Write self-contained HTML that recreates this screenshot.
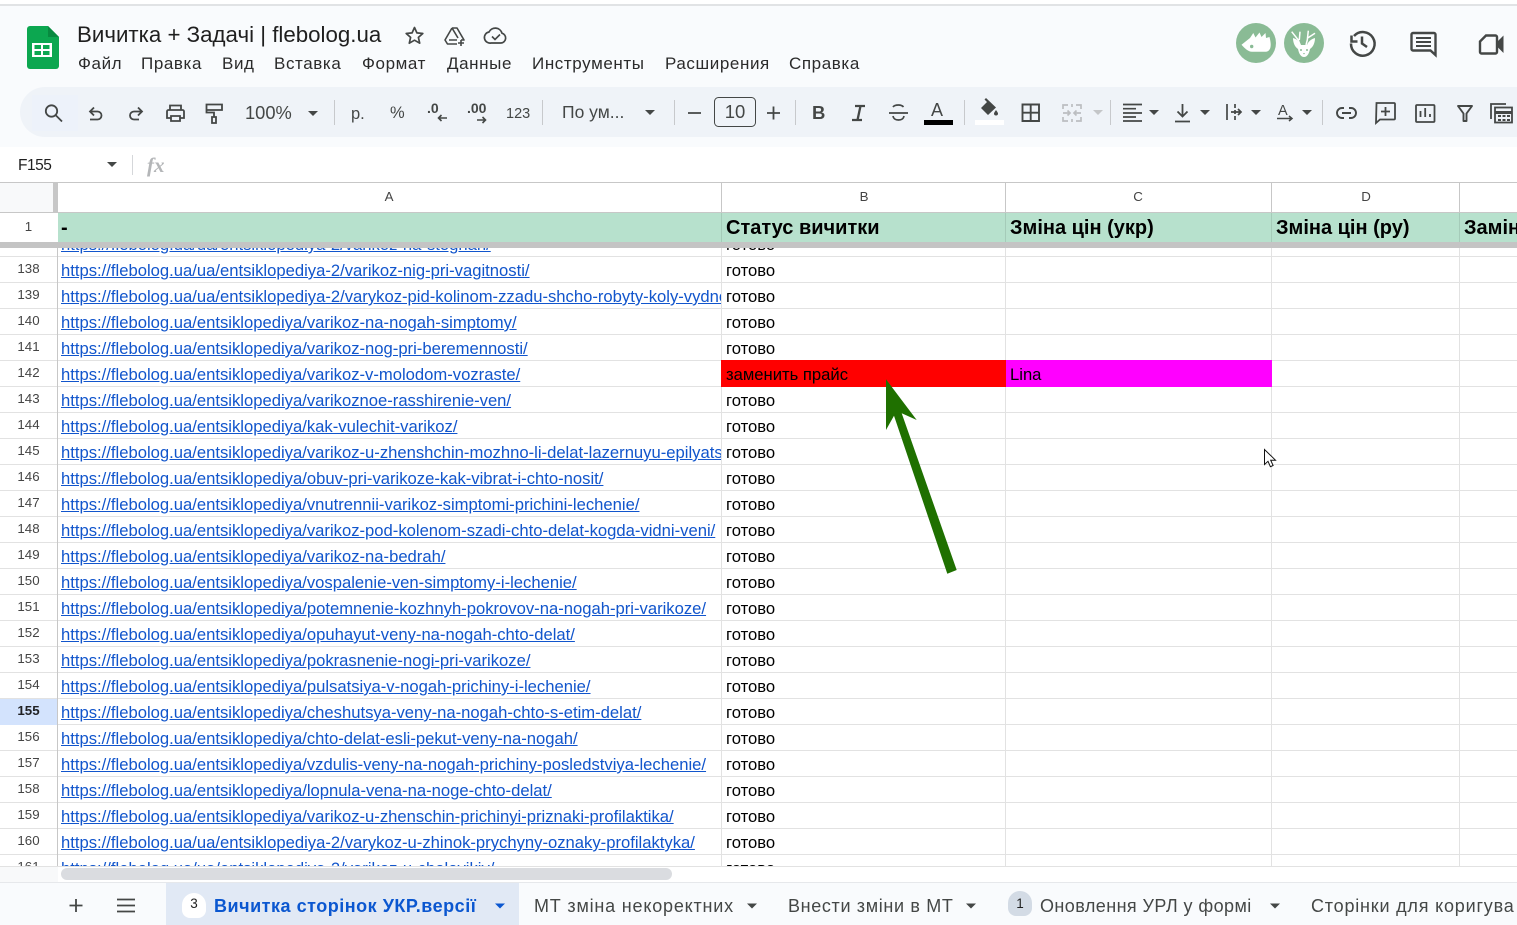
<!DOCTYPE html>
<html lang="uk"><head><meta charset="utf-8"><title>Вичитка + Задачі | flebolog.ua</title>
<style>
html,body{margin:0;padding:0;width:1517px;height:925px;overflow:hidden;background:#fff}
body{position:relative;font-family:"Liberation Sans",sans-serif;color:#000}
.abs,.r,.v,.t{position:absolute}
.r{left:0;width:1517px;height:25px;border-bottom:1px solid #e2e2e2}
.r i{position:absolute;left:0;width:57px;top:0;height:25px;text-align:center;font:normal 13.3px/23px "Liberation Sans",sans-serif;color:#444}
.r a{position:absolute;left:61px;top:0;width:660px;overflow:hidden;white-space:nowrap;font-size:16.64px;line-height:28px;height:25px;color:#1155cc;text-decoration:underline;text-underline-offset:1px}
.r b{position:absolute;left:726px;top:0;font-weight:normal;font-size:16.64px;line-height:28px;height:25px;overflow:hidden}
.v{width:1px;background:#e2e2e2;top:248px;height:619px}
.t{white-space:nowrap}
.m{top:54px;font-size:17px;line-height:20px;color:#2b2b2b;letter-spacing:.6px}
.tb{top:896px;font-size:18px;line-height:21px;color:#444746}
svg text{font-family:"Liberation Sans",sans-serif}
</style></head><body>

<!-- top chrome -->
<div class="abs" style="left:0;top:6px;width:1517px;height:141px;background:#f9fbfd"></div>
<div class="abs" style="left:0;top:4px;width:1517px;height:2px;background:#e1e3e5"></div>
<div class="abs" style="left:20px;top:87px;width:1497px;height:50px;background:#eff3f8;border-radius:25px 0 0 25px"></div>
<div class="abs" style="left:32px;top:95px;width:46px;height:36px;background:#edf2fa"></div>

<div class="t" style="left:77px;top:21px;font-size:22.3px;line-height:28px;color:#1f1f1f">Вичитка + Задачі | flebolog.ua</div>
<div class="t m" style="left:78px">Файл</div>
<div class="t m" style="left:141px">Правка</div>
<div class="t m" style="left:222px">Вид</div>
<div class="t m" style="left:274px">Вставка</div>
<div class="t m" style="left:362px">Формат</div>
<div class="t m" style="left:447px">Данные</div>
<div class="t m" style="left:532px">Инструменты</div>
<div class="t m" style="left:665px">Расширения</div>
<div class="t m" style="left:789px">Справка</div>

<!-- grid: frozen header -->
<div class="abs" style="left:0;top:182px;width:1517px;height:1px;background:#c7c7c7"></div>
<div class="abs" style="left:0;top:183px;width:53px;height:29px;background:#f8f9fa"></div>
<div class="abs" style="left:53px;top:183px;width:5px;height:29px;background:#c7c7c7"></div>
<div class="abs" style="left:0;top:212px;width:1517px;height:1px;background:#c7c7c7"></div>
<div class="abs" style="left:58px;top:213px;width:1459px;height:29px;background:#b7e1cd"></div>
<div class="abs" style="left:721px;top:183px;width:1px;height:29px;background:#c7c7c7"></div>
<div class="abs" style="left:1005px;top:183px;width:1px;height:29px;background:#c7c7c7"></div>
<div class="abs" style="left:1271px;top:183px;width:1px;height:29px;background:#c7c7c7"></div>
<div class="abs" style="left:1459px;top:183px;width:1px;height:29px;background:#c7c7c7"></div>
<div class="abs" style="left:721px;top:213px;width:1px;height:29px;background:#a5cbb9"></div>
<div class="abs" style="left:1005px;top:213px;width:1px;height:29px;background:#a5cbb9"></div>
<div class="abs" style="left:1271px;top:213px;width:1px;height:29px;background:#a5cbb9"></div>
<div class="abs" style="left:1459px;top:213px;width:1px;height:29px;background:#a5cbb9"></div>
<div class="t" style="left:380px;top:189px;width:18px;text-align:center;font-size:13.3px;line-height:16px;color:#444">A</div>
<div class="t" style="left:855px;top:189px;width:18px;text-align:center;font-size:13.3px;line-height:16px;color:#444">B</div>
<div class="t" style="left:1129px;top:189px;width:18px;text-align:center;font-size:13.3px;line-height:16px;color:#444">C</div>
<div class="t" style="left:1357px;top:189px;width:18px;text-align:center;font-size:13.3px;line-height:16px;color:#444">D</div>
<div class="t" style="left:0;top:219px;width:57px;text-align:center;font-size:13.3px;line-height:16px;color:#444">1</div>
<div class="t" style="left:61px;top:217px;font-size:20px;font-weight:bold;line-height:23px">-</div>
<div class="t" style="left:726px;top:217px;font-size:20px;font-weight:bold;line-height:23px">Статус вичитки</div>
<div class="t" style="left:1010px;top:217px;font-size:20px;font-weight:bold;line-height:23px">Зміна цін (укр)</div>
<div class="t" style="left:1276px;top:217px;font-size:20px;font-weight:bold;line-height:23px">Зміна цін (ру)</div>
<div class="t" style="left:1464px;top:217px;font-size:20px;font-weight:bold;line-height:23px">Замін</div>

<!-- rows -->
<div class="abs" style="left:0;top:248px;width:1517px;height:619px;overflow:hidden">
<div class="r" style="top:-17px"><i></i><a>https://flebolog.ua/ua/entsiklopediya-2/varikoz-na-stognah/</a><b>готово</b></div>
<div class="r" style="top:9px"><i>138</i><a>https://flebolog.ua/ua/entsiklopediya-2/varikoz-nig-pri-vagitnosti/</a><b>готово</b></div>
<div class="r" style="top:35px"><i>139</i><a>https://flebolog.ua/ua/entsiklopediya-2/varykoz-pid-kolinom-zzadu-shcho-robyty-koly-vydno</a><b>готово</b></div>
<div class="r" style="top:61px"><i>140</i><a>https://flebolog.ua/entsiklopediya/varikoz-na-nogah-simptomy/</a><b>готово</b></div>
<div class="r" style="top:87px"><i>141</i><a>https://flebolog.ua/entsiklopediya/varikoz-nog-pri-beremennosti/</a><b>готово</b></div>
<div class="r" style="top:113px"><i>142</i><a>https://flebolog.ua/entsiklopediya/varikoz-v-molodom-vozraste/</a></div>
<div class="r" style="top:139px"><i>143</i><a>https://flebolog.ua/entsiklopediya/varikoznoe-rasshirenie-ven/</a><b>готово</b></div>
<div class="r" style="top:165px"><i>144</i><a>https://flebolog.ua/entsiklopediya/kak-vulechit-varikoz/</a><b>готово</b></div>
<div class="r" style="top:191px"><i>145</i><a>https://flebolog.ua/entsiklopediya/varikoz-u-zhenshchin-mozhno-li-delat-lazernuyu-epilyatsiyu/</a><b>готово</b></div>
<div class="r" style="top:217px"><i>146</i><a>https://flebolog.ua/entsiklopediya/obuv-pri-varikoze-kak-vibrat-i-chto-nosit/</a><b>готово</b></div>
<div class="r" style="top:243px"><i>147</i><a>https://flebolog.ua/entsiklopediya/vnutrennii-varikoz-simptomi-prichini-lechenie/</a><b>готово</b></div>
<div class="r" style="top:269px"><i>148</i><a>https://flebolog.ua/entsiklopediya/varikoz-pod-kolenom-szadi-chto-delat-kogda-vidni-veni/</a><b>готово</b></div>
<div class="r" style="top:295px"><i>149</i><a>https://flebolog.ua/entsiklopediya/varikoz-na-bedrah/</a><b>готово</b></div>
<div class="r" style="top:321px"><i>150</i><a>https://flebolog.ua/entsiklopediya/vospalenie-ven-simptomy-i-lechenie/</a><b>готово</b></div>
<div class="r" style="top:347px"><i>151</i><a>https://flebolog.ua/entsiklopediya/potemnenie-kozhnyh-pokrovov-na-nogah-pri-varikoze/</a><b>готово</b></div>
<div class="r" style="top:373px"><i>152</i><a>https://flebolog.ua/entsiklopediya/opuhayut-veny-na-nogah-chto-delat/</a><b>готово</b></div>
<div class="r" style="top:399px"><i>153</i><a>https://flebolog.ua/entsiklopediya/pokrasnenie-nogi-pri-varikoze/</a><b>готово</b></div>
<div class="r" style="top:425px"><i>154</i><a>https://flebolog.ua/entsiklopediya/pulsatsiya-v-nogah-prichiny-i-lechenie/</a><b>готово</b></div>
<div class="r" style="top:451px"><i style="background:#d3e3fd;font-weight:bold;color:#202124;height:26px">155</i><a>https://flebolog.ua/entsiklopediya/cheshutsya-veny-na-nogah-chto-s-etim-delat/</a><b>готово</b></div>
<div class="r" style="top:477px"><i>156</i><a>https://flebolog.ua/entsiklopediya/chto-delat-esli-pekut-veny-na-nogah/</a><b>готово</b></div>
<div class="r" style="top:503px"><i>157</i><a>https://flebolog.ua/entsiklopediya/vzdulis-veny-na-nogah-prichiny-posledstviya-lechenie/</a><b>готово</b></div>
<div class="r" style="top:529px"><i>158</i><a>https://flebolog.ua/entsiklopediya/lopnula-vena-na-noge-chto-delat/</a><b>готово</b></div>
<div class="r" style="top:555px"><i>159</i><a>https://flebolog.ua/entsiklopediya/varikoz-u-zhenschin-prichinyi-priznaki-profilaktika/</a><b>готово</b></div>
<div class="r" style="top:581px"><i>160</i><a>https://flebolog.ua/ua/entsiklopediya-2/varykoz-u-zhinok-prychyny-oznaky-profilaktyka/</a><b>готово</b></div>
<div class="r" style="top:607px"><i>161</i><a>https://flebolog.ua/ua/entsiklopediya-2/varikoz-u-cholovikiv/</a><b>готово</b></div>
</div>
<div class="v" style="left:57px;background:#c7c7c7"></div>
<div class="v" style="left:721px"></div>
<div class="v" style="left:1005px"></div>
<div class="v" style="left:1271px"></div>
<div class="v" style="left:1459px"></div>

<!-- coloured cells -->
<div class="abs" style="left:721px;top:360px;width:285px;height:27px;background:#ff0000"></div>
<div class="abs" style="left:1006px;top:360px;width:266px;height:27px;background:#ff00ff"></div>
<div class="t" style="left:726px;top:361px;font-size:16.64px;line-height:28px">заменить прайс</div>
<div class="t" style="left:1010px;top:361px;font-size:16.64px;line-height:28px">Lina</div>

<!-- frozen bar -->
<div class="abs" style="left:0;top:242px;width:1517px;height:6px;background:#c4c4c4"></div>

<!-- scroll area -->
<div class="abs" style="left:0;top:866px;width:1517px;height:1px;background:#e2e2e2"></div>
<div class="abs" style="left:0;top:867px;width:1517px;height:15px;background:#fff"></div>
<div class="abs" style="left:0;top:867px;width:58px;height:15px;background:#f8f9fa"></div>
<div class="abs" style="left:61px;top:868px;width:611px;height:12px;background:#dadce0;border-radius:6px"></div>

<!-- tabs -->
<div class="abs" style="left:0;top:882px;width:1517px;height:1px;background:#e6e8eb"></div>
<div class="abs" style="left:0;top:883px;width:1517px;height:42px;background:#f9fbfd"></div>
<div class="abs" style="left:166px;top:883px;width:353px;height:42px;background:#e1e9f5"></div>
<div class="abs" style="left:182px;top:893px;width:24px;height:25px;background:#fff;border-radius:12px 12px 8px 8px"></div>
<div class="t" style="left:182px;top:896px;width:24px;text-align:center;font-size:13.5px;line-height:16px;color:#1f1f1f">3</div>
<div class="t tb" style="left:214px;font-weight:bold;color:#0b57d0;letter-spacing:.52px">Вичитка сторінок УКР.версії</div>
<div class="t tb" style="left:534px;letter-spacing:.8px">МТ зміна некоректних</div>
<div class="t tb" style="left:788px;letter-spacing:.65px">Внести зміни в МТ</div>
<div class="abs" style="left:1008px;top:891px;width:24px;height:25px;background:#d3dbe5;border-radius:12px 12px 8px 8px"></div>
<div class="t" style="left:1008px;top:896px;width:24px;text-align:center;font-size:13.5px;line-height:16px;color:#1f1f1f">1</div>
<div class="t tb" style="left:1040px;letter-spacing:.43px">Оновлення УРЛ у формі</div>
<div class="t tb" style="left:1311px;letter-spacing:.8px">Сторінки для коригува</div>

<!-- graphics overlay -->
<svg class="abs" style="left:0;top:0" width="1517" height="925" viewBox="0 0 1517 925">
<!-- sheets logo -->
<path d="M30 26H48L59 37V66a3 3 0 0 1-3 3H30a3 3 0 0 1-3-3V29a3 3 0 0 1 3-3z" fill="#0ca750"/>
<path d="M48 26L59 37H48z" fill="#088a40"/>
<path d="M32 43H52V57H32z" fill="#fff"/>
<path d="M34.5 45H41V49H34.5zM43 45H49.5V49H43zM34.5 51H41V55H34.5zM43 51H49.5V55H43z" fill="#0ca750"/>
<!-- star, drive, cloud -->
<path d="M414.5 27.5l2.4 5.4 5.9.6-4.4 3.9 1.3 5.8-5.2-3-5.2 3 1.3-5.8-4.4-3.9 5.9-.6z" fill="none" stroke="#444746" stroke-width="1.7" stroke-linejoin="round"/>
<path d="M452 28h5l7 12h-3M452 28l-7 12 2.5 4H457M452 28l6 10M449 40h8" fill="none" stroke="#444746" stroke-width="1.6" stroke-linejoin="round"/>
<path d="M461 40v6M458 43h6" stroke="#444746" stroke-width="1.6"/>
<path d="M491 43h10a5 5 0 0 0 1-9.800 7 7 0 0 0-13-1.200 5.500 5.500 0 0 0 2 11z" fill="none" stroke="#444746" stroke-width="1.700"/>
<path d="M492 36.500l3 3 5-5" fill="none" stroke="#444746" stroke-width="1.600"/>
<!-- avatars -->
<circle cx="1256" cy="43" r="20" fill="#8abb95"/>
<path d="M1241.500 44.700L1250 38L1253.300 33L1255.500 37.500L1259.500 32.500L1261.500 37L1265.500 33L1266 38L1269.500 37C1270.500 41 1271 44 1270.500 47C1270 50 1268 51.700 1266 51.700H1252C1248 51.700 1244.500 48 1241.500 44.700z" fill="#fff"/>
<circle cx="1251.700" cy="46.500" r="1.700" fill="#8abb95"/>
<circle cx="1304" cy="43" r="20" fill="#8abb95"/>
<path d="M1291.700 31.700L1298.300 40L1300 45M1300 31.700L1299.300 40M1315 33.300L1307.300 38.300M1308.300 30.700L1307.300 40L1306 45" stroke="#fff" stroke-width="1.500" fill="none"/>
<path d="M1293 38C1297 39 1300 42 1301 45H1307C1308 42 1311 39 1315 38C1315 43 1313 47 1310 49C1309 54 1307 57 1304 57C1301 57 1299 54 1298 49C1295 47 1293 43 1293 38z" fill="#fff"/>
<circle cx="1301" cy="50" r="1" fill="#8abb95"/><circle cx="1307" cy="50" r="1" fill="#8abb95"/>
<path d="M1303 53h2l-1 1.500z" fill="#8abb95"/>
<!-- history -->
<path d="M1354 36a11.800 11.800 0 1 1-3 7.500" fill="none" stroke="#444746" stroke-width="2.500"/>
<path d="M1351.500 35.500v6h6" fill="none" stroke="#444746" stroke-width="2.500"/>
<path d="M1362 36.500v7l5 3.500" fill="none" stroke="#444746" stroke-width="2.500"/>
<!-- comment -->
<path d="M1413 33h21a1.500 1.500 0 0 1 1.500 1.500V55l-5-4.500H1413a1.500 1.500 0 0 1-1.500-1.500V34.500a1.500 1.500 0 0 1 1.500-1.500z" fill="none" stroke="#444746" stroke-width="2.400"/>
<path d="M1416 38h15M1416 42h15M1416 46h15" stroke="#444746" stroke-width="2"/>
<!-- video -->
<path d="M1486 35.500h9.500a1.500 1.500 0 0 1 1.500 1.500v15a1.500 1.500 0 0 1-1.500 1.500h-14a1.500 1.500 0 0 1-1.500-1.500V41.500z" fill="none" stroke="#444746" stroke-width="2.400"/>
<path d="M1498 41l5.500-5.500V53l-5.500-5.500z" fill="#444746"/>

<!-- toolbar -->
<g fill="none" stroke="#444746" stroke-width="1.800">
<circle cx="51.500" cy="111" r="5.700"/><path d="M55.500 115l6.500 6.500"/>
<path d="M94 107.500l-4 4 4 4M90 111.500h7.500a4 4 0 0 1 0 8H90"/>
<path d="M138 107.500l4 4-4 4M142 111.500h-8a4 4 0 0 0 0 8h5"/>
<path d="M170 110v-4.500h11v4.500M171 116h9v5h-9zM171 118h-4v-6.500a1.500 1.500 0 0 1 1.500-1.500h14a1.500 1.500 0 0 1 1.500 1.500V118h-4"/>
<path d="M206.500 104.500h15.500v5.500h-15.500zM206.500 107v5.500h7.500v4.500M212 117h4v6h-4z"/>
</g>
<g fill="#444746">
<text x="245" y="119" font-size="18.300">100%</text>
<path d="M308 111h10l-5 5z"/>
<text x="351" y="119" font-size="16.500">р.</text>
<text x="390" y="118" font-size="16.500">%</text>
<text x="427" y="113" font-size="14" font-weight="bold">.0</text>
<text x="467" y="113" font-size="14" font-weight="bold">.00</text>
<text x="506" y="118" font-size="14.500">123</text>
<text x="562" y="118" font-size="17.500">По ум...</text>
<path d="M645 110h10l-5 5z"/>
<text x="812" y="119" font-size="18.500" font-weight="bold">B</text>
<text x="931" y="116" font-size="18">A</text>
<path d="M1093 110h10l-5 5z" fill="#c4c6c8"/>
<path d="M1149 110h10l-5 5zM1200 110h10l-5 5zM1251 110h10l-5 5zM1302 110h10l-5 5z"/>
</g>
<path d="M855 106h10M852 120h10M860.500 106l-3 14" fill="none" stroke="#444746" stroke-width="2.300"/>
<path d="M447 118h-8.500m3-3l-3 3 3 3M477 120h8.500m-3-3l3 3-3 3" fill="none" stroke="#444746" stroke-width="1.600"/>
<g fill="#c7c9cc">
<rect x="334" y="100" width="1" height="25"/><rect x="542" y="100" width="1" height="25"/><rect x="674" y="100" width="1" height="25"/><rect x="795" y="100" width="1" height="25"/><rect x="964" y="100" width="1" height="25"/><rect x="1110" y="100" width="1" height="25"/><rect x="1322" y="100" width="1" height="25"/>
</g>
<rect x="714.500" y="97.500" width="41" height="29" rx="4" fill="none" stroke="#444746" stroke-width="1"/>
<text x="735" y="118" font-size="18.500" fill="#444746" text-anchor="middle">10</text>
<path d="M688 113h13M767 113h13M773.500 106.500v13" stroke="#444746" stroke-width="1.800"/>
<path d="M889 113h19M893 107c1-1.500 3-2 5.500-2 2.200 0 4 .8 5 2M893 116c.5 3 3 4 5.500 4s5-1 5.500-4" fill="none" stroke="#444746" stroke-width="1.700"/>
<rect x="924" y="120" width="29" height="5" fill="#000"/>
<rect x="975" y="120" width="29" height="5" fill="#fff"/>
<path d="M986 98l-1.500 1.500 2.500 2.500-6 6 7 7 8-7.500z" fill="#444746"/>
<path d="M996 110c1.500 2 2 3 2 3.500a2 2 0 0 1-4 0c0-.5.500-1.500 2-3.500z" fill="#444746"/>
<path d="M1022.500 104.500h16.500v16.500h-16.500zM1030.700 104.500v16.500M1022.500 112.700h16.500" fill="none" stroke="#444746" stroke-width="1.900"/>
<path d="M1063 109v-4h5M1076 105h5v4M1063 117v4h5M1076 121h5v-4M1063 113h7m-2.500-2.500l2.500 2.500-2.500 2.500M1081 113h-7m2.500-2.500l-2.500 2.500 2.500 2.500M1072 104v3M1072 119v3" fill="none" stroke="#bcbec1" stroke-width="1.700"/>
<path d="M1123 104.500h19M1123 108.700h13M1123 113h19M1123 117h13M1123 121h19" stroke="#444746" stroke-width="1.700"/>
<path d="M1175 121.500h15M1182.500 104v12.500m-5-5l5 5 5-5" fill="none" stroke="#444746" stroke-width="1.800"/>
<path d="M1227 104v16M1235 104v4M1235 110v4M1235 116v4M1231 112h10m-3-3l3 3-3 3" fill="none" stroke="#444746" stroke-width="1.700"/>
<text x="1278" y="115" font-size="14.500" fill="#444746">A</text>
<path d="M1277 118.500h15m-3-2.500l3 2.500-3 2.500" fill="none" stroke="#444746" stroke-width="1.500"/>
<path d="M1344 108h-2a5 5 0 0 0 0 10h2M1349 108h2a5 5 0 0 1 0 10h-2M1342 113h9" fill="none" stroke="#444746" stroke-width="1.900"/>
<path d="M1376.500 103h17.500a1 1 0 0 1 1 1v14.500a1 1 0 0 1-1 1h-14l-4 3.500zM1385.500 107v9M1381 111.500h9" fill="none" stroke="#444746" stroke-width="1.800"/>
<path d="M1417 105h16.500a1 1 0 0 1 1 1v15a1 1 0 0 1-1 1H1417a1 1 0 0 1-1-1v-15a1 1 0 0 1 1-1zM1420.500 117v-6M1425.200 117v-9M1430 117v-3" fill="none" stroke="#444746" stroke-width="1.800"/>
<path d="M1458 106h14l-5.500 7.500v7.500h-3v-7.500z" fill="none" stroke="#444746" stroke-width="1.900" stroke-linejoin="round"/>
<path d="M1491 119v-15h15" fill="none" stroke="#444746" stroke-width="1.800"/>
<rect x="1495" y="107.500" width="17" height="15" fill="none" stroke="#444746" stroke-width="1.800"/>
<path d="M1495 111h17v3h-17zM1498 115h3v2h-3zM1502.500 115h3v2h-3zM1507 115h3v2h-3zM1498 119h3v2h-3zM1502.500 119h3v2h-3zM1507 119h3v2h-3z" fill="#444746"/>

<!-- formula bar -->
<text x="18" y="170" font-size="15.500" fill="#1f1f1f" style="letter-spacing:-.5px">F155</text>
<path d="M107 162h10l-5 5z" fill="#444746"/>
<rect x="132" y="155" width="1" height="20" fill="#d5d7da"/>
<text x="147" y="172" font-size="21" style="font-family:'Liberation Serif',serif;font-style:italic;font-weight:bold" fill="#b4b6b8">fx</text>

<!-- tab icons -->
<path d="M76 899v13M69.500 905.500h13" stroke="#444746" stroke-width="1.800"/>
<path d="M117 899.500h18M117 905.500h18M117 911.500h18" stroke="#444746" stroke-width="1.800"/>
<path d="M495 903.500h10l-5 5z" fill="#0b57d0"/>
<path d="M747 903.500h10l-5 5zM966 903.500h10l-5 5zM1270 903.500h10l-5 5z" fill="#444746"/>

<!-- arrow -->
<path d="M886 379.300L886 430L894 415.700L947.300 573.700L956.700 570L901.700 413.300L916.700 420z" fill="#1f7000"/>
<!-- cursor -->
<path d="M1264.500 449.500v15l3.500-3.200 2.400 5.400 2.700-1.200-2.400-5.300h4.800z" fill="#fff" stroke="#111" stroke-width="1"/>
</svg>
</body></html>
